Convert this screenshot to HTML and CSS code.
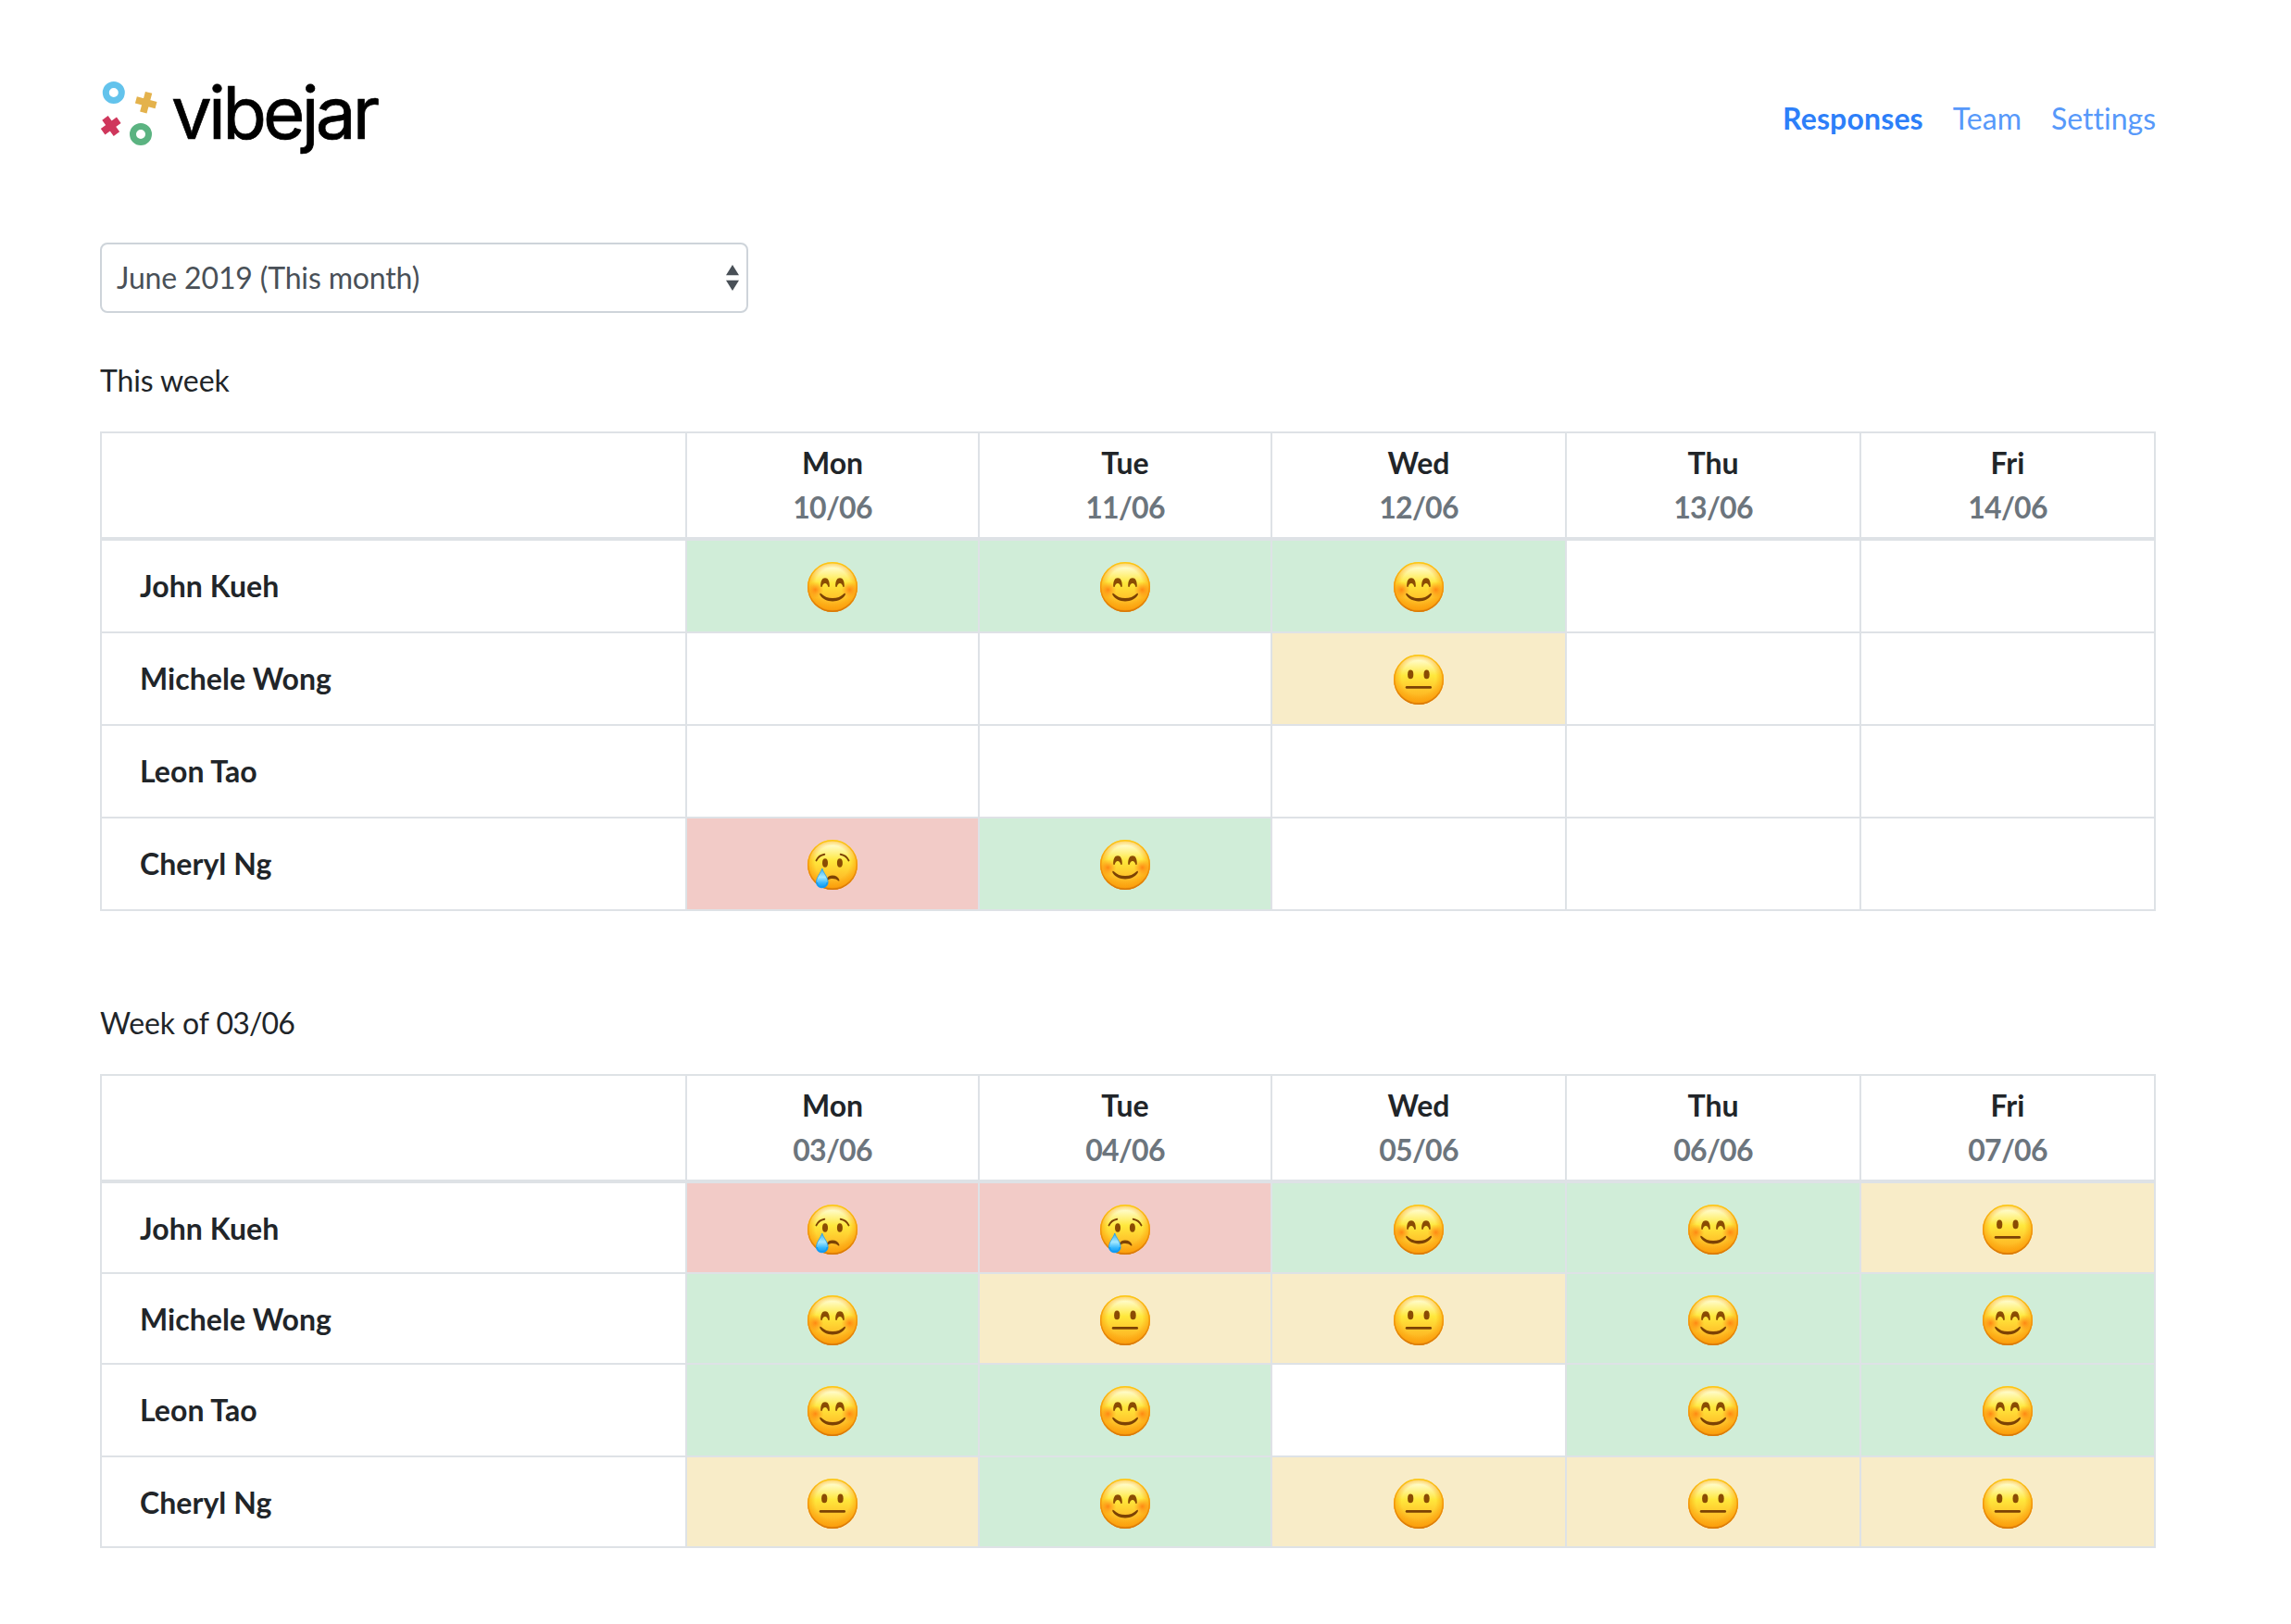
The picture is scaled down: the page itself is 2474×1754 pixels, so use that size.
FILE: index.html
```html
<!DOCTYPE html>
<html lang="en">
<head>
<meta charset="utf-8">
<title>Vibejar – Responses</title>
<link rel="stylesheet" href="styles.css">
</head>
<body>
<svg class="sprite" aria-hidden="true">
  <defs>
    <linearGradient id="face-fill" x1="0" y1="0" x2="0" y2="1">
      <stop offset="0" stop-color="#fff7a8"/>
      <stop offset="0.12" stop-color="#fffbc4"/>
      <stop offset="0.42" stop-color="#ffe83c"/>
      <stop offset="0.7" stop-color="#ffc62c"/>
      <stop offset="1" stop-color="#fca414"/>
    </linearGradient>
    <radialGradient id="face-edge" cx="0.5" cy="0.46" r="0.55">
      <stop offset="0.62" stop-color="#fb9c08" stop-opacity="0"/>
      <stop offset="0.88" stop-color="#fb9c08" stop-opacity="0.6"/>
      <stop offset="1" stop-color="#dd7a05" stop-opacity="1"/>
    </radialGradient>
    <linearGradient id="face-rim" x1="0" y1="0" x2="0" y2="1">
      <stop offset="0" stop-color="#fcc814"/>
      <stop offset="0.5" stop-color="#f3940c"/>
      <stop offset="1" stop-color="#d87808"/>
    </linearGradient>
    <radialGradient id="blush">
      <stop offset="0" stop-color="#ff7a0c" stop-opacity="0.85"/>
      <stop offset="1" stop-color="#ff8c14" stop-opacity="0"/>
    </radialGradient>
    <linearGradient id="tear-fill" x1="0" y1="0" x2="0" y2="1">
      <stop offset="0" stop-color="#38b0f4"/>
      <stop offset="0.45" stop-color="#a4e8fe"/>
      <stop offset="0.75" stop-color="#38b8fc"/>
      <stop offset="1" stop-color="#0c94ee"/>
    </linearGradient>
    <clipPath id="face-clip"><circle cx="27" cy="27" r="27"/></clipPath>
  </defs>
  <symbol id="face" viewBox="0 0 54 54">
    <circle cx="27" cy="27" r="27" fill="url(#face-fill)"/>
    <circle cx="27" cy="27" r="27" fill="url(#face-edge)"/>
    <circle cx="27" cy="27" r="26.3" fill="none" stroke="url(#face-rim)" stroke-width="1.4"/>
  </symbol>
  <symbol id="happy" viewBox="0 0 54 54">
    <use href="#face" width="54" height="54"/>
    <g clip-path="url(#face-clip)">
      <circle cx="8.5" cy="30" r="9" fill="url(#blush)"/>
      <circle cx="45.5" cy="30" r="9" fill="url(#blush)"/>
    </g>
    <path d="M14.2 26.3C14 20.5 15.8 17.2 19 17.2s5 3.3 4.8 9.1c-.1.9-1.300.9-1.600.1-.6-2.200-1.600-3.500-3.200-3.500s-2.600 1.300-3.200 3.500c-.3.800-1.500.800-1.600-.1z" fill="#8a4c04"/>
    <path d="M30.2 26.3C30 20.5 31.800 17.200 35 17.200s5 3.300 4.800 9.100c-.1.900-1.300.900-1.600.1-.6-2.200-1.600-3.500-3.200-3.500s-2.600 1.300-3.200 3.500c-.3.800-1.500.800-1.600-.1z" fill="#8a4c04"/>
    <path d="M13.300 34.200c.3-.7 1-.6 1.600 0 3.200 3.200 7.300 4.900 12.200 4.900s9-1.700 12.200-4.900c.6-.6 1.300-.7 1.600 0 .2.500 0 1.200-.4 1.800-2.700 4-7.500 6.400-13.400 6.400s-10.700-2.400-13.400-6.400c-.4-.6-.6-1.300-.4-1.800z" fill="#7c4204"/>
  </symbol>
  <symbol id="neutral" viewBox="0 0 54 54">
    <use href="#face" width="54" height="54"/>
    <ellipse cx="18.200" cy="21.400" rx="3.100" ry="4.900" fill="#8a4c04"/>
    <ellipse cx="35.600" cy="21.400" rx="3.100" ry="4.900" fill="#8a4c04"/>
    <path d="M14.200 35.400h25.400" stroke="#7c4204" stroke-width="2.900" stroke-linecap="round"/>
  </symbol>
  <symbol id="sad" viewBox="0 0 54 54">
    <use href="#face" width="54" height="54"/>
    <ellipse cx="19" cy="25" rx="3" ry="4.800" fill="#8a4c04"/>
    <ellipse cx="34.900" cy="25" rx="3" ry="4.800" fill="#8a4c04"/>
    <path d="M9.500 22.400c1.700-3.600 4.700-6 8.800-6.700M44.500 22.400c-1.700-3.600-4.700-6-8.800-6.700" fill="none" stroke="#7c4204" stroke-width="1.900" stroke-linecap="round"/>
    <path d="M20.500 43c1-3 3.300-4.400 6.500-4.400 3.600 0 6.300 1.900 7.400 4.900.3 1-.6 1.300-1.300.7-1.700-1.500-3.500-2.300-6.100-2.300-2.300 0-4 .6-5.500 1.900z" fill="#7c4204"/>
    <path d="M15.800 31c1.400 4.800 6.300 9.500 6.300 14.700 0 3.700-2.800 6.100-6.300 6.100s-6.300-2.400-6.300-6.100c0-5.200 4.900-9.900 6.300-14.700z" fill="url(#tear-fill)" stroke="#1c9cf0" stroke-width="0.800"/>
    <path d="M10.300 46c.3 3 2.600 5 5.500 5s5.200-2 5.500-5" fill="none" stroke="#109cf4" stroke-width="1.500"/>
  </symbol>
</svg>

<div class="page">
  <header class="header">
    <a class="brand">
      <svg class="brand-mark" viewBox="0 0 66 72" width="66" height="72">
        <circle cx="14.800" cy="14" r="8.500" fill="none" stroke="#63c3ec" stroke-width="7"/>
        <circle cx="44" cy="59" r="8.500" fill="none" stroke="#5bb381" stroke-width="7"/>
        <path d="M49.700 13.500v22.400M38.500 24.700h22.400" stroke="#e4b24c" stroke-width="7.600" transform="rotate(15 49.700 24.700)"/>
        <path d="M11.700 39.400v21.200M1.100 50h21.200" stroke="#cf375c" stroke-width="7.900" transform="rotate(-36 11.700 50)"/>
      </svg>
      <span class="brand-name">vibejar</span>
    </a>
    <nav class="nav">
      <a class="nav-link active">Responses</a>
      <a class="nav-link">Team</a>
      <a class="nav-link">Settings</a>
    </nav>
  </header>

  <div class="month-select">
    <span>June 2019 (This month)</span>
    <svg class="month-arrows" viewBox="0 0 14 28" width="14" height="28"><path d="M7 0l7 11.300H0zM7 28l7-11.300H0z" fill="#495057"/></svg>
  </div>

  <section class="week">
    <h2 class="week-title">This week</h2>
    <table class="grid">
      <colgroup><col class="col-name"><col class="col-day"><col class="col-day"><col class="col-day-wide"><col class="col-day-wide"><col class="col-last"></colgroup>
      <thead><tr><th></th><th>Mon<span class="date">10/06</span></th><th>Tue<span class="date">11/06</span></th><th>Wed<span class="date">12/06</span></th><th>Thu<span class="date">13/06</span></th><th>Fri<span class="date">14/06</span></th></tr></thead>
      <tbody>
        <tr><td class="name">John Kueh</td><td class="good"><svg class="mood"><use href="#happy"/></svg></td><td class="good"><svg class="mood"><use href="#happy"/></svg></td><td class="good"><svg class="mood"><use href="#happy"/></svg></td><td></td><td></td></tr>
        <tr><td class="name">Michele Wong</td><td></td><td></td><td class="okay"><svg class="mood"><use href="#neutral"/></svg></td><td></td><td></td></tr>
        <tr><td class="name">Leon Tao</td><td></td><td></td><td></td><td></td><td></td></tr>
        <tr><td class="name">Cheryl Ng</td><td class="bad"><svg class="mood"><use href="#sad"/></svg></td><td class="good"><svg class="mood"><use href="#happy"/></svg></td><td></td><td></td><td></td></tr>
      </tbody>
    </table>
  </section>

  <section class="week">
    <h2 class="week-title">Week of <span class="week-date">03/06</span></h2>
    <table class="grid">
      <colgroup><col class="col-name"><col class="col-day"><col class="col-day"><col class="col-day-wide"><col class="col-day-wide"><col class="col-last"></colgroup>
      <thead><tr><th></th><th>Mon<span class="date">03/06</span></th><th>Tue<span class="date">04/06</span></th><th>Wed<span class="date">05/06</span></th><th>Thu<span class="date">06/06</span></th><th>Fri<span class="date">07/06</span></th></tr></thead>
      <tbody>
        <tr class="short"><td class="name">John Kueh</td><td class="bad"><svg class="mood"><use href="#sad"/></svg></td><td class="bad"><svg class="mood"><use href="#sad"/></svg></td><td class="good"><svg class="mood"><use href="#happy"/></svg></td><td class="good"><svg class="mood"><use href="#happy"/></svg></td><td class="okay"><svg class="mood"><use href="#neutral"/></svg></td></tr>
        <tr class="short"><td class="name">Michele Wong</td><td class="good"><svg class="mood"><use href="#happy"/></svg></td><td class="okay"><svg class="mood"><use href="#neutral"/></svg></td><td class="okay"><svg class="mood"><use href="#neutral"/></svg></td><td class="good"><svg class="mood"><use href="#happy"/></svg></td><td class="good"><svg class="mood"><use href="#happy"/></svg></td></tr>
        <tr><td class="name">Leon Tao</td><td class="good"><svg class="mood"><use href="#happy"/></svg></td><td class="good"><svg class="mood"><use href="#happy"/></svg></td><td></td><td class="good"><svg class="mood"><use href="#happy"/></svg></td><td class="good"><svg class="mood"><use href="#happy"/></svg></td></tr>
        <tr class="short"><td class="name">Cheryl Ng</td><td class="okay"><svg class="mood"><use href="#neutral"/></svg></td><td class="good"><svg class="mood"><use href="#happy"/></svg></td><td class="okay"><svg class="mood"><use href="#neutral"/></svg></td><td class="okay"><svg class="mood"><use href="#neutral"/></svg></td><td class="okay"><svg class="mood"><use href="#neutral"/></svg></td></tr>
      </tbody>
    </table>
  </section>
</div>
</body>
</html>
```

FILE: styles.css
```css
* { box-sizing: border-box; }

body {
  margin: 0;
  background: #fff;
  color: #212529;
  font-family: Lato, sans-serif;
  font-size: 32px;
  line-height: 48px;
  font-variant-ligatures: none;
}

.sprite {
  position: absolute;
  width: 0;
  height: 0;
}

.page {
  width: 2220px;
  margin-left: 108px;
  padding-top: 80px;
}

.header {
  display: flex;
  justify-content: space-between;
  align-items: flex-start;
  height: 182px;
}

.brand {
  display: flex;
  padding-top: 6px;
}

.brand-name {
  margin-left: 11px;
  color: #000;
  font-family: Inter, sans-serif;
  font-size: 78px;
  font-weight: 400;
  line-height: 72px;
  letter-spacing: -3.8px;
  -webkit-text-stroke: 0.7px #000;
}

.nav {
  display: flex;
  gap: 32px;
  padding-top: 24px;
}

.nav-link { color: #5799fa; }

.nav-link.active {
  color: #2d7ff9;
  font-weight: 700;
  letter-spacing: 0.15px;
}

.month-select {
  display: flex;
  justify-content: space-between;
  align-items: center;
  width: 700px;
  height: 76px;
  padding: 0 8px 0 16px;
  border: 2px solid #ced4da;
  border-radius: 8px;
  color: #495057;
  letter-spacing: -0.15px;
}

.week-title {
  margin: 0;
  padding-top: 49px;
  height: 128px;
  font-size: 32px;
  font-weight: 400;
  line-height: 48px;
  letter-spacing: -0.1px;
}

.week-date { letter-spacing: -0.8px; }

.week + .week { padding-top: 48px; }

.grid {
  width: 2220px;
  table-layout: fixed;
  border-collapse: separate;
  border-spacing: 0;
}

.col-name { width: 632px; }
.col-day { width: 316px; }
.col-day-wide { width: 318px; }
.col-last { width: 320px; }

.grid th,
.grid td {
  padding: 0;
  border-left: 2px solid #dee2e6;
  border-bottom: 2px solid #dee2e6;
  vertical-align: top;
}

.grid th:last-child,
.grid td:last-child { border-right: 2px solid #dee2e6; }

.grid th {
  height: 118px;
  padding-top: 8px;
  border-top: 2px solid #dee2e6;
  border-bottom-width: 4px;
  font-weight: 700;
  text-align: center;
}

.date {
  display: block;
  color: #6c757d;
  letter-spacing: -0.7px;
}

.grid td { height: 100px; }
.grid .short td { height: 98px; }

.grid .name {
  padding: 25px 0 0 41px;
  font-weight: 700;
  letter-spacing: 0.05px;
}

.good { background: #d0edd8; }
.okay { background: #f8ecc8; }
.bad { background: #f2cbc7; }

.mood {
  display: block;
  width: 54px;
  height: 54px;
  margin: 23px auto 0;
}
```
